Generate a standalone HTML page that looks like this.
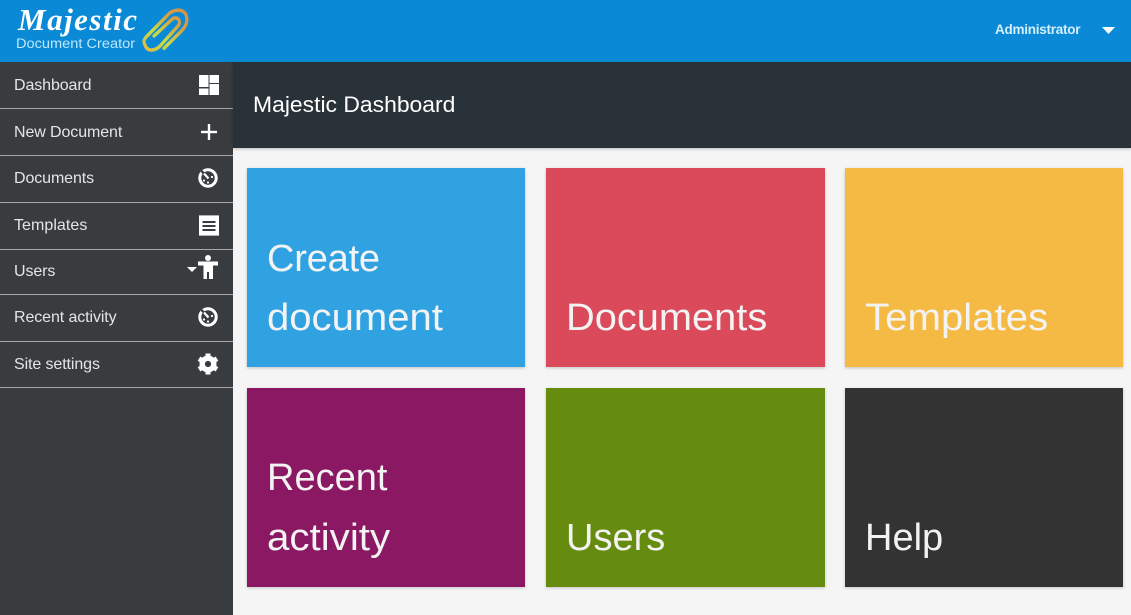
<!DOCTYPE html>
<html>
<head>
<meta charset="utf-8">
<style>
*{box-sizing:border-box;margin:0;padding:0}
html,body{width:1131px;height:615px;overflow:hidden;background:#f5f5f5;font-family:"Liberation Sans",sans-serif}
.abs{position:absolute;white-space:nowrap}
#top{position:absolute;left:0;top:0;width:1131px;height:62px;background:#0a8ad6}
#side{position:absolute;left:0;top:62px;width:233px;height:553px;background:#393c3f}
#head{position:absolute;left:233px;top:62px;width:898px;height:86px;background:#2a3239;box-shadow:0 1px 3px rgba(0,0,0,.25)}
.line{position:absolute;left:0;width:233px;height:1px;background:#a4a6a7}
.nav{position:absolute;left:14px;color:#e4e5e5;font-size:16px;line-height:20px;white-space:nowrap;letter-spacing:-.1px}
.tile{position:absolute;width:278px;height:199px;box-shadow:0 1px 3px rgba(0,0,0,.2)}
.tl{position:absolute;left:20px;color:#f3f3f3;font-size:38px;line-height:60px;white-space:nowrap;transform-origin:0 50%}
svg{position:absolute;overflow:visible}
</style>
</head>
<body>
<div id="top"></div>
<div class="abs" style="left:18px;top:1px;font:italic bold 31px/38px 'Liberation Serif',serif;color:#fff;letter-spacing:1.5px">Majestic</div>
<div class="abs" style="left:16px;top:36px;font-size:13.5px;line-height:16px;color:#bfe6fa;transform:scaleX(1.08);transform-origin:0 50%">Document Creator</div>
<svg style="left:140px;top:8px" width="50" height="46" viewBox="0 0 50 46" fill="none">
<defs><linearGradient id="g" x1="0" y1="1" x2="1" y2="0"><stop offset="0" stop-color="#e0b840"/><stop offset=".35" stop-color="#c4dc4a"/><stop offset=".7" stop-color="#d8a040"/><stop offset="1" stop-color="#d8904a"/></linearGradient></defs>
<path transform="scale(1,1.12)" d="M14 25 L32 10 C36 7 41 10 39 15 L21 33 C15 39 7 39 5 33 C3 30 4 28 6 26 L27 7 C32 1 43 0 46 6 C49 13 44 18 42 20 L24 36" stroke="url(#g)" stroke-width="3.200" stroke-linecap="round" stroke-linejoin="round"/>
</svg>
<div class="abs" style="left:995px;top:21px;font-size:13.500px;line-height:17px;font-weight:bold;color:#d4eefb;letter-spacing:-.25px">Administrator</div>
<svg style="left:1102px;top:27px" width="13" height="7"><path d="M0 0H13L6.500 7Z" fill="#fff"/></svg>

<div id="side"></div>
<div class="nav" style="top:76px">Dashboard</div>
<div class="nav" style="top:123px">New Document</div>
<div class="nav" style="top:169px">Documents</div>
<div class="nav" style="top:216px;letter-spacing:.05px">Templates</div>
<div class="nav" style="top:262px">Users</div>
<div class="nav" style="top:308px">Recent activity</div>
<div class="nav" style="top:355px">Site settings</div>
<div class="line" style="top:108px"></div>
<div class="line" style="top:155px"></div>
<div class="line" style="top:202px"></div>
<div class="line" style="top:249px"></div>
<div class="line" style="top:294px"></div>
<div class="line" style="top:341px"></div>
<div class="line" style="top:387px"></div>

<svg style="left:199px;top:75px" width="20" height="20" fill="#fff"><rect width="9.500" height="12"/><rect y="13.500" width="9.500" height="6.500"/><rect x="10.500" width="9.500" height="8"/><rect x="10.500" y="9" width="9.500" height="11"/></svg>
<svg style="left:201px;top:124px" width="16" height="16" fill="#fff"><rect x="6.800" width="2.400" height="16"/><rect y="6.800" width="16" height="2.400"/></svg>
<svg style="left:198px;top:168px" width="20" height="20" viewBox="0 0 20 20"><circle cx="10" cy="10" r="8.200" fill="none" stroke="#fff" stroke-width="3"/><path d="M3.500 3L10 9.500" stroke="#393c3f" stroke-width="2.500"/><path d="M6 5.500L10.500 10.500" stroke="#fff" stroke-width="2.200"/><circle cx="14" cy="9" r="1.100" fill="#fff"/><circle cx="10" cy="14.500" r="1.100" fill="#fff"/><circle cx="6" cy="12.500" r="1.100" fill="#fff"/></svg>
<svg style="left:199px;top:215px" width="20" height="21" fill="#fff"><path d="M0 1H20V20H0Z"/><path d="M0 0H20V1H0ZM0 20H20V21H0Z" fill="#fff" opacity=".6"/><rect x="3.500" y="6" width="13" height="2" fill="#393c3f"/><rect x="3.500" y="10" width="13" height="2" fill="#393c3f"/><rect x="3.500" y="14" width="13" height="2" fill="#393c3f"/></svg>
<svg style="left:187px;top:267px" width="10" height="5"><path d="M0 0H10L5 5Z" fill="#fff"/></svg>
<svg style="left:198px;top:255px" width="21" height="24" fill="#fff"><circle cx="10" cy="3" r="3"/><path d="M0 6.500H20V10.500H15V24H11V17H9V24H5.500V10.500H0Z"/></svg>
<svg style="left:198px;top:307px" width="20" height="20" viewBox="0 0 20 20"><circle cx="10" cy="10" r="8.200" fill="none" stroke="#fff" stroke-width="3"/><path d="M3.500 3L10 9.500" stroke="#393c3f" stroke-width="2.500"/><path d="M6 5.500L10.500 10.500" stroke="#fff" stroke-width="2.200"/><circle cx="14" cy="9" r="1.100" fill="#fff"/><circle cx="10" cy="14.500" r="1.100" fill="#fff"/><circle cx="6" cy="12.500" r="1.100" fill="#fff"/></svg>
<svg style="left:197px;top:353px" width="22" height="22" viewBox="0 0 22 22"><circle cx="11" cy="11" r="5.800" fill="none" stroke="#fff" stroke-width="5.400"/><g stroke="#fff" stroke-width="5"><path d="M11 0.500V4"/><path d="M11 18V21.500"/><path d="M2 5.700L5 7.500"/><path d="M17 14.500L20 16.300"/><path d="M2 16.300L5 14.500"/><path d="M17 7.500L20 5.700"/></g></svg>

<div id="head"></div>
<div class="abs" style="left:253px;top:91px;font-size:22px;line-height:28px;color:#fff;transform:scaleX(1.041);transform-origin:0 50%">Majestic Dashboard</div>

<div class="tile" style="left:247px;top:168px;background:#30a2e2">
<div class="tl" style="top:61px;letter-spacing:-.2px">Create</div><div class="tl" style="top:120px;transform:scaleX(1.054)">document</div></div>
<div class="tile" style="left:546px;top:168px;width:279px;background:#db4a5b">
<div class="tl" style="top:120px;transform:scaleX(1.047)">Documents</div></div>
<div class="tile" style="left:845px;top:168px;background:#f5ba43">
<div class="tl" style="top:120px;transform:scaleX(1.058)">Templates</div></div>
<div class="tile" style="left:247px;top:388px;background:#8b1862">
<div class="tl" style="top:60px">Recent</div><div class="tl" style="top:120px;transform:scaleX(1.06)">activity</div></div>
<div class="tile" style="left:546px;top:388px;width:279px;background:#668c0f">
<div class="tl" style="top:120px">Users</div></div>
<div class="tile" style="left:845px;top:388px;background:#333333">
<div class="tl" style="top:120px">Help</div></div>
</body>
</html>
